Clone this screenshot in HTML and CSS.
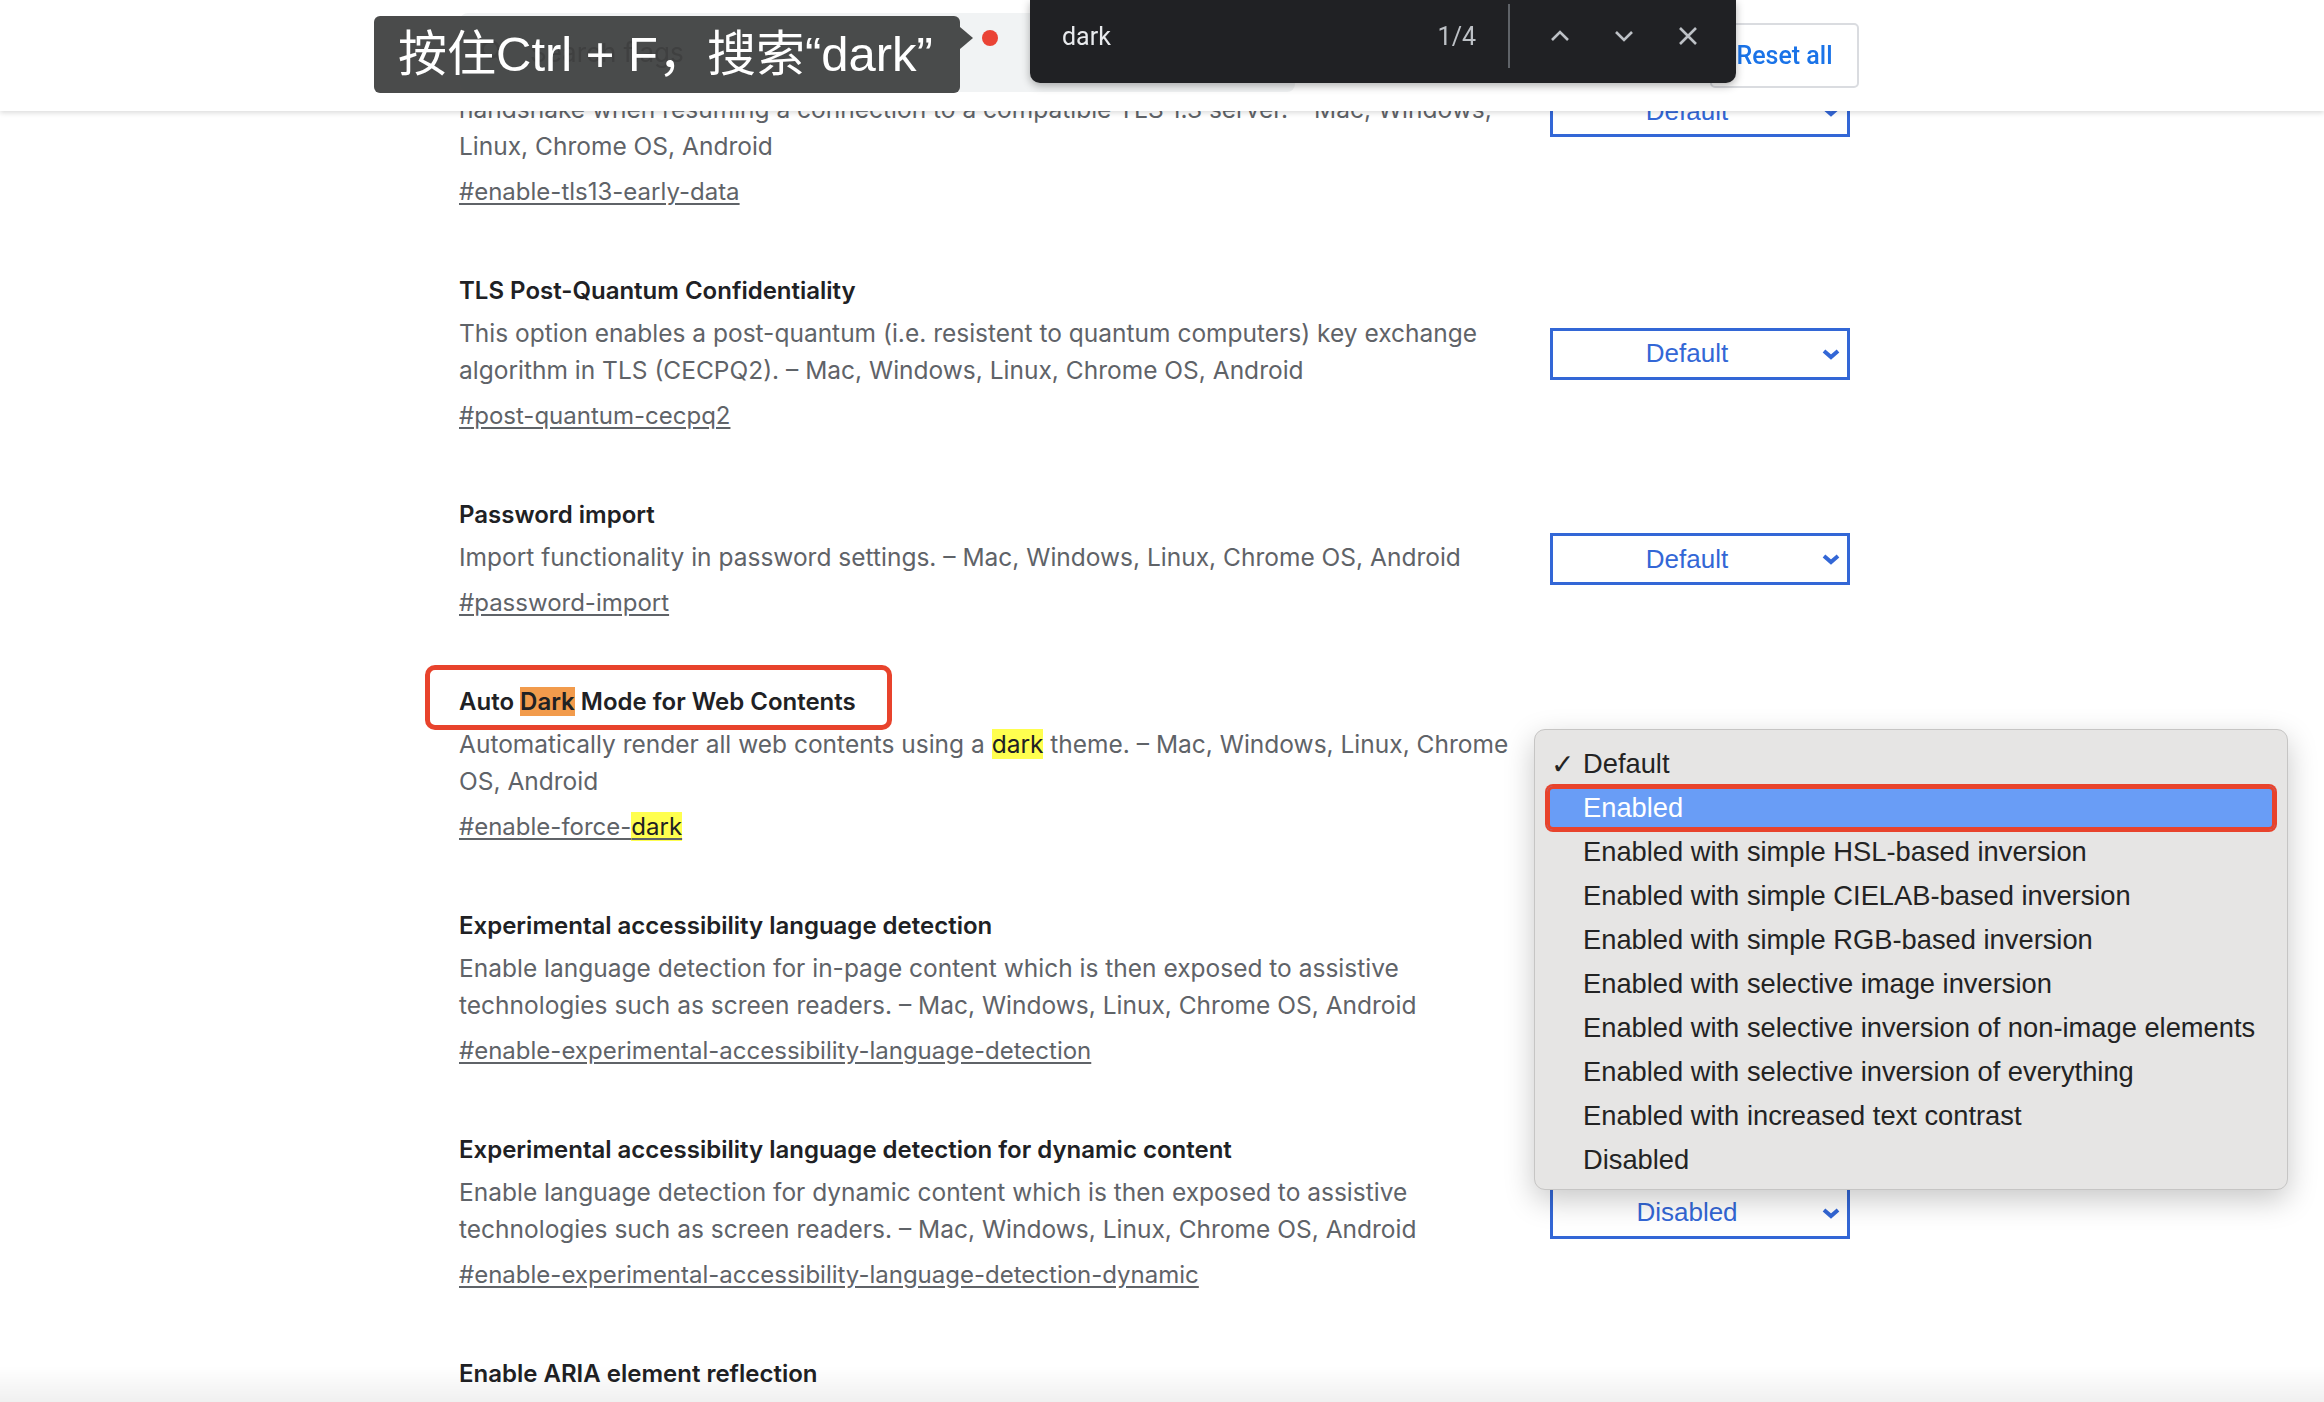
FILE: index.html
```html
<!DOCTYPE html>
<html lang="en">
<head>
  <meta charset="UTF-8" />
  <title>Experiments</title>
  <link rel="stylesheet" href="styles.css">
</head>
<body>
  <header class="top">
    <div class="top-inner">
      <div class="search">
        <svg class="search-icon" viewBox="0 0 24 24" width="30" height="30"><circle cx="10" cy="10" r="6.5" fill="none" stroke="#5f6368" stroke-width="2.4"/><path d="M15 15l6 6" stroke="#5f6368" stroke-width="2.4" stroke-linecap="round"/></svg>
        <span>Search flags</span>
      </div>
      <button class="reset">Reset all</button>
    </div>
  </header>

  <main class="flags">
    <div class="flag">
      <div class="flag-text">
        <h3 class="name">TLS 1.3 Early Data</h3>
        <p class="desc">This option enables TLS 1.3 Early Data, allowing GET requests to be sent during the handshake when resuming a connection to a compatible TLS 1.3 server. – Mac, Windows, Linux, Chrome OS, Android</p>
        <a class="link">#enable-tls13-early-data</a>
      </div>
      <div class="select"><span>Default</span><svg viewBox="0 0 20 12" width="20" height="12"><path d="M3 3l7 6 7-6" fill="none" stroke="currentColor" stroke-width="4"/></svg></div>
    </div>

    <div class="flag">
      <div class="flag-text">
        <h3 class="name">TLS Post-Quantum Confidentiality</h3>
        <p class="desc">This option enables a post-quantum (i.e. resistent to quantum computers) key exchange algorithm in TLS (CECPQ2). – Mac, Windows, Linux, Chrome OS, Android</p>
        <a class="link">#post-quantum-cecpq2</a>
      </div>
      <div class="select"><span>Default</span><svg viewBox="0 0 20 12" width="20" height="12"><path d="M3 3l7 6 7-6" fill="none" stroke="currentColor" stroke-width="4"/></svg></div>
    </div>

    <div class="flag">
      <div class="flag-text">
        <h3 class="name">Password import</h3>
        <p class="desc">Import functionality in password settings. – Mac, Windows, Linux, Chrome OS, Android</p>
        <a class="link">#password-import</a>
      </div>
      <div class="select"><span>Default</span><svg viewBox="0 0 20 12" width="20" height="12"><path d="M3 3l7 6 7-6" fill="none" stroke="currentColor" stroke-width="4"/></svg></div>
    </div>

    <div class="flag">
      <div class="flag-text">
        <h3 class="name marked">Auto <mark class="hit current">Dark</mark> Mode for Web Contents</h3>
        <p class="desc">Automatically render all web contents using a <mark class="hit">dark</mark> theme. – Mac, Windows, Linux, Chrome OS, Android</p>
        <a class="link">#enable-force-<mark class="hit">dark</mark></a>
      </div>
      <div class="select"><span>Default</span><svg viewBox="0 0 20 12" width="20" height="12"><path d="M3 3l7 6 7-6" fill="none" stroke="currentColor" stroke-width="4"/></svg></div>
    </div>

    <div class="flag">
      <div class="flag-text">
        <h3 class="name">Experimental accessibility language detection</h3>
        <p class="desc">Enable language detection for in-page content which is then exposed to assistive technologies such as screen readers. – Mac, Windows, Linux, Chrome OS, Android</p>
        <a class="link">#enable-experimental-accessibility-language-detection</a>
      </div>
      <div class="select"><span>Disabled</span><svg viewBox="0 0 20 12" width="20" height="12"><path d="M3 3l7 6 7-6" fill="none" stroke="currentColor" stroke-width="4"/></svg></div>
    </div>

    <div class="flag">
      <div class="flag-text">
        <h3 class="name">Experimental accessibility language detection for dynamic content</h3>
        <p class="desc">Enable language detection for dynamic content which is then exposed to assistive technologies such as screen readers. – Mac, Windows, Linux, Chrome OS, Android</p>
        <a class="link">#enable-experimental-accessibility-language-detection-dynamic</a>
      </div>
      <div class="select"><span>Disabled</span><svg viewBox="0 0 20 12" width="20" height="12"><path d="M3 3l7 6 7-6" fill="none" stroke="currentColor" stroke-width="4"/></svg></div>
    </div>

    <div class="flag">
      <div class="flag-text">
        <h3 class="name">Enable ARIA element reflection</h3>
        <p class="desc">Enables setting ARIA relationship attributes that reference elements. – Mac, Windows, Linux, Chrome OS, Android</p>
        <a class="link">#enable-aria-element-reflection</a>
      </div>
      <div class="select"><span>Default</span><svg viewBox="0 0 20 12" width="20" height="12"><path d="M3 3l7 6 7-6" fill="none" stroke="currentColor" stroke-width="4"/></svg></div>
    </div>
  </main>

  <!-- overlays -->
  <div class="tip">按住Ctrl + F，搜索“dark”</div>
  <div class="rec-dot"></div>

  <div class="findbar">
    <span class="find-query">dark</span>
    <span class="find-count">1/4</span>
    <span class="find-sep"></span>
    <svg class="find-btn" viewBox="0 0 20 20" width="20" height="20"><path d="M2 14l8-8 8 8" fill="none" stroke="#bdc1c6" stroke-width="2.6"/></svg>
    <svg class="find-btn" viewBox="0 0 20 20" width="20" height="20"><path d="M2 6l8 8 8-8" fill="none" stroke="#bdc1c6" stroke-width="2.6"/></svg>
    <svg class="find-btn" viewBox="0 0 20 20" width="20" height="20"><path d="M2 2l16 16M18 2L2 18" fill="none" stroke="#bdc1c6" stroke-width="2.6"/></svg>
  </div>

  <ul class="menu">
    <li class="item"><span class="check">✓</span>Default</li>
    <li class="item picked"><span class="check"></span>Enabled</li>
    <li class="item"><span class="check"></span>Enabled with simple HSL-based inversion</li>
    <li class="item"><span class="check"></span>Enabled with simple CIELAB-based inversion</li>
    <li class="item"><span class="check"></span>Enabled with simple RGB-based inversion</li>
    <li class="item"><span class="check"></span>Enabled with selective image inversion</li>
    <li class="item"><span class="check"></span>Enabled with selective inversion of non-image elements</li>
    <li class="item"><span class="check"></span>Enabled with selective inversion of everything</li>
    <li class="item"><span class="check"></span>Enabled with increased text contrast</li>
    <li class="item"><span class="check"></span>Disabled</li>
  </ul>

  <div class="fade"></div>
</body>
</html>
```

FILE: styles.css
```css
html, body {
  margin: 0;
  height: 100%;
  overflow: hidden;
  background: #fff;
}

body {
  font-family: Inter, Roboto, sans-serif;
  color: #202124;
}

/* header */
.top {
  position: fixed;
  top: 0;
  left: 0;
  right: 0;
  height: 111px;
  background: #fff;
  box-shadow: 0 2px 5px rgba(0, 0, 0, 0.14);
  z-index: 5;
}

.top-inner {
  width: 1399px;
  margin-left: 460px;
  height: 100%;
  display: flex;
  align-items: center;
  justify-content: space-between;
}

.search {
  width: 835px;
  height: 79px;
  margin-top: -7px;
  background: #f1f3f4;
  border-radius: 8px;
  display: flex;
  align-items: center;
  gap: 22px;
  padding-left: 18px;
  box-sizing: border-box;
  font-size: 26px;
  color: #5f6368;
}

.reset {
  width: 149px;
  height: 65px;
  background: #fff;
  border: 2px solid #dadce0;
  border-radius: 5px;
  color: #1a73e8;
  font-family: Roboto, sans-serif;
  font-size: 25px;
  font-weight: 500;
  padding: 0;
}

/* flag list */
.flags {
  margin-left: 459px;
  padding-top: 12px;
  display: flex;
  flex-direction: column;
  gap: 63px;
}

.flag {
  display: flex;
  align-items: center;
  gap: 31px;
}

.flag-text {
  width: 1060px;
}

.name {
  margin: 0 0 6px;
  width: fit-content;
  font-size: 24px;
  font-weight: 600;
  line-height: 36px;
  color: #202124;
}

.name.marked {
  position: relative;
}

.name.marked::after {
  content: '';
  position: absolute;
  left: -34px;
  right: -36px;
  top: -19px;
  bottom: -10px;
  border: 5px solid #e8432c;
  border-radius: 10px;
}

.desc {
  margin: 0;
  font-size: 24.5px;
  line-height: 37px;
  color: #5f6368;
}

.link {
  display: block;
  width: fit-content;
  margin-top: 9px;
  font-size: 24px;
  line-height: 36px;
  color: #5f6368;
  text-decoration: underline;
  text-underline-offset: 3px;
}

.hit {
  background: #ffff4f;
  color: #202124;
}

.hit.current {
  background: #f29b4c;
}

.select {
  width: 300px;
  height: 52px;
  box-sizing: border-box;
  border: 3px solid #3367d6;
  display: flex;
  align-items: center;
  padding-right: 6px;
  color: #3367d6;
  font-family: 'Liberation Sans', Arial, sans-serif;
  font-size: 26px;
}

.select span {
  flex: 1;
  text-align: center;
}

/* tooltip + recording dot */
.tip {
  position: fixed;
  top: 16px;
  left: 374px;
  width: 586px;
  height: 77px;
  box-sizing: border-box;
  padding-left: 24px;
  background: rgba(60, 61, 61, 0.93);
  border-radius: 6px;
  color: #fff;
  font-family: 'Liberation Sans', 'Noto Sans CJK SC', sans-serif;
  font-size: 49px;
  line-height: 77px;
  white-space: nowrap;
  z-index: 8;
}

.tip::after {
  content: '';
  position: absolute;
  right: -13px;
  top: 11px;
  border-top: 11px solid transparent;
  border-bottom: 11px solid transparent;
  border-left: 13px solid rgba(60, 61, 61, 0.93);
}

.rec-dot {
  position: fixed;
  top: 30px;
  left: 982px;
  width: 16px;
  height: 16px;
  border-radius: 50%;
  background: #ea4335;
  z-index: 8;
}

/* find bar */
.findbar {
  position: fixed;
  top: 0;
  left: 1030px;
  width: 706px;
  height: 83px;
  box-sizing: border-box;
  padding: 0 38px 11px 32px;
  background: #202124;
  border-radius: 0 0 10px 10px;
  box-shadow: 0 3px 8px rgba(0, 0, 0, 0.3);
  display: flex;
  align-items: center;
  z-index: 9;
}

.find-query {
  flex: 1;
  font-family: Roboto, sans-serif;
  font-size: 25px;
  color: #e8eaed;
}

.find-count {
  font-family: Roboto, sans-serif;
  font-size: 25px;
  color: #bdc1c6;
}

.find-sep {
  width: 2px;
  height: 64px;
  margin: 4px 40px 0 32px;
  background: #5f6368;
  align-self: flex-start;
}

.find-btn {
  margin-right: 44px;
}

.find-btn:last-child {
  margin-right: 0;
}

/* dropdown menu */
.menu {
  position: absolute;
  top: 729px;
  left: 1534px;
  width: 754px;
  height: 461px;
  box-sizing: border-box;
  margin: 0;
  padding: 12px 12px 10px;
  list-style: none;
  background: #e6e5e4;
  border: 1px solid #c6c5c4;
  border-radius: 11px;
  box-shadow: 0 10px 30px rgba(0, 0, 0, 0.22);
  font-family: 'Liberation Sans', Arial, sans-serif;
  font-size: 27.3px;
  color: #232323;
  z-index: 4;
}

.item {
  height: 44px;
  display: flex;
  align-items: center;
  border-radius: 6px;
}

.check {
  width: 36px;
  box-sizing: border-box;
  padding-left: 4px;
  font-family: 'DejaVu Sans', sans-serif;
  font-size: 28px;
  font-weight: bold;
}

.item.picked {
  background: #699df6;
  color: #fff;
  box-shadow: 0 0 0 2px #e8432c, inset 0 0 0 3px #e8432c;
}

.fade {
  position: fixed;
  left: 0;
  right: 0;
  bottom: 0;
  height: 36px;
  background: linear-gradient(rgba(0, 0, 0, 0), rgba(0, 0, 0, 0.06));
  z-index: 3;
}
```
